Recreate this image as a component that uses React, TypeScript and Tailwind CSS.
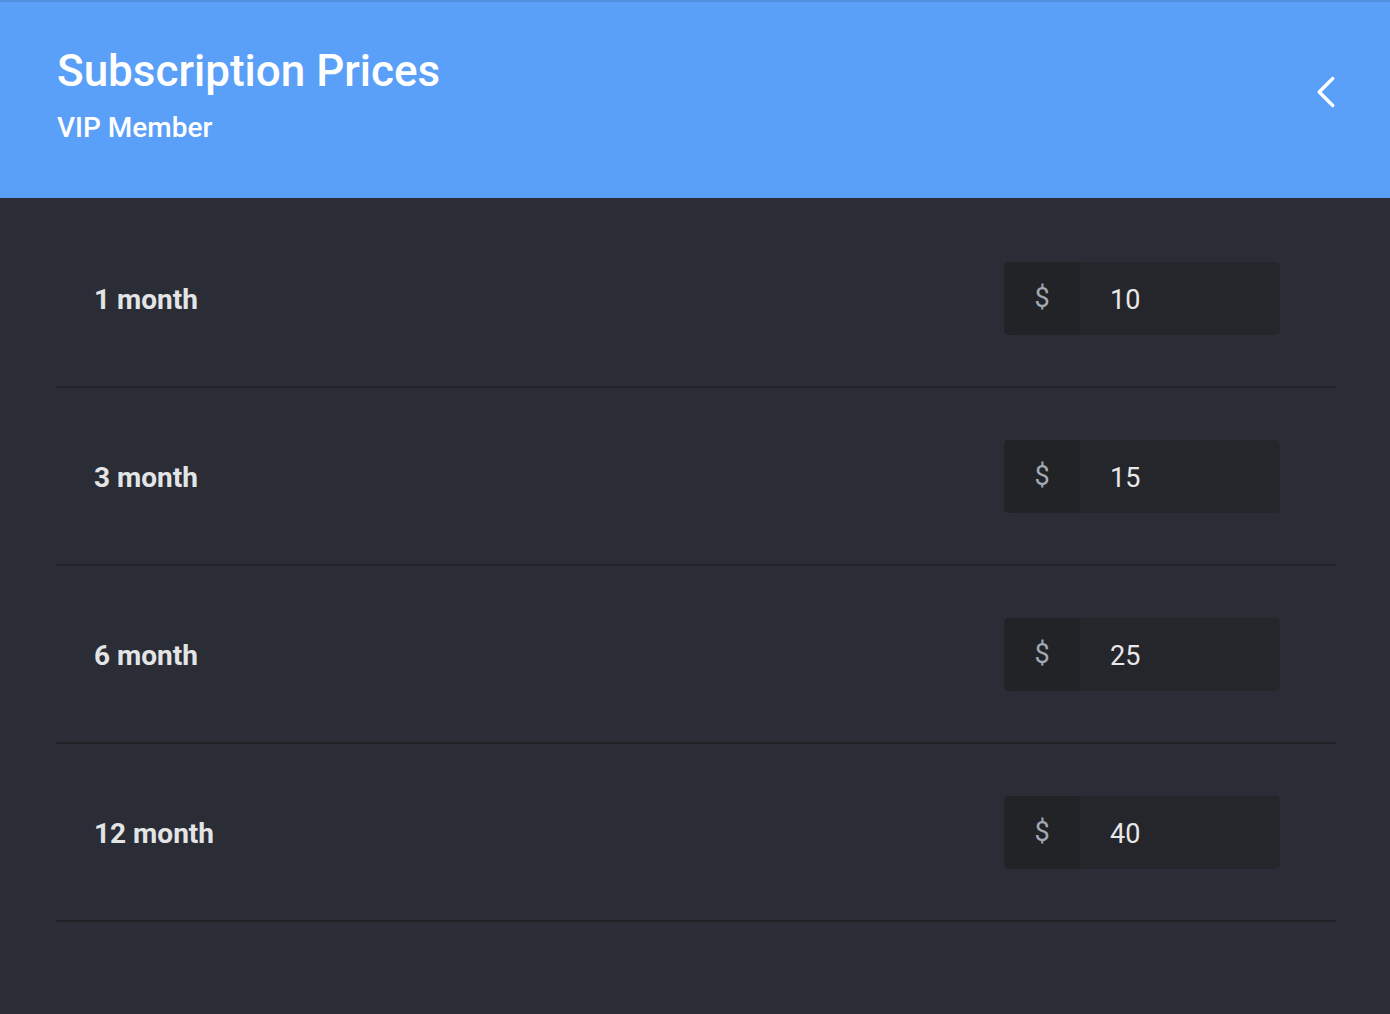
import { ChevronLeft } from 'lucide-react';

const prices = [
  { label: '1 month', value: '10' },
  { label: '3 month', value: '15' },
  { label: '6 month', value: '25' },
  { label: '12 month', value: '40' },
];

const App = () => {
  return (
    <div className="min-h-[1014px] bg-[#2a2d35] font-['Roboto',sans-serif]">
      <header className="h-[198px] bg-[#5ba0f8] border-t-2 border-[#5190e0] flex items-start justify-between pt-[43px] pl-[57px] pr-[37px]">
        <div className="flex flex-col">
          <h1 className="text-[44px] leading-[52px] font-medium text-white">Subscription Prices</h1>
          <p className="text-[28px] leading-[36px] font-medium text-white mt-[13px]">VIP Member</p>
        </div>
        <button className="text-white mt-[20px]">
          <ChevronLeft size={54} strokeWidth={1.5} />
        </button>
      </header>
      <main className="pl-[56px] pr-[54px] pt-[12px]">
        {prices.map((p) => (
          <div
            key={p.label}
            className="h-[178px] border-b-2 border-[#212226] flex items-center justify-between pl-[38px] pr-[56px]"
          >
            <span className="text-[28px] font-bold text-[#e3e4e6] pt-[4px]">{p.label}</span>
            <div className="flex w-[276px] h-[73px] rounded-[5px] overflow-hidden bg-[#25262b]">
              <div className="w-[76px] shrink-0 bg-[#222327] flex items-center justify-center text-[27px] text-[#a3a9b3]">
                $
              </div>
              <input
                className="w-0 min-w-0 flex-1 bg-transparent outline-none pl-[30px] pt-[5px] text-[27px] text-[#e8e8ea]"
                defaultValue={p.value}
              />
            </div>
          </div>
        ))}
      </main>
    </div>
  );
};

export default App;
